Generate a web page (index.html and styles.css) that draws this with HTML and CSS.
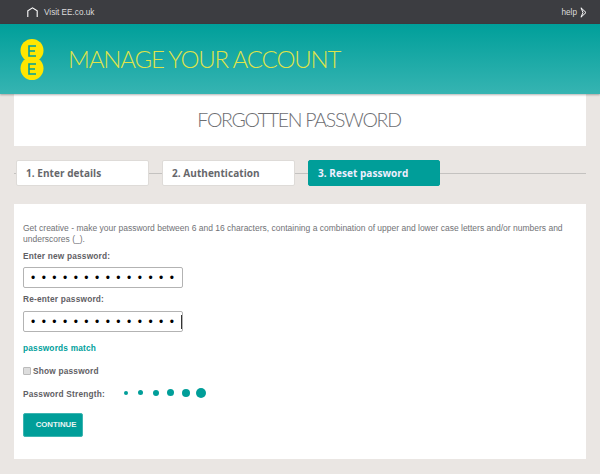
FILE: index.html
```html
<!DOCTYPE html>
<html lang="en">
<head>
<meta charset="utf-8">
<title>Manage your account</title>
<link rel="stylesheet" href="styles.css">
</head>
<body>
<div class="topbar">
  <a class="visit">
    <svg class="home" width="11" height="11" viewBox="0 0 11 11"><path d="M.8 10V3.800L5.500 .8l4.700 3V10" fill="none" stroke="#fff" stroke-width="1.100"/></svg>
    <span>Visit EE.co.uk</span>
  </a>
  <a class="help">help
    <svg class="help-icon" width="7" height="11" viewBox="0 0 7 11"><path d="M1 .8l5 4.700-5 4.700M1 .8l2 4.700-2 4.700" fill="none" stroke="#fff" stroke-width="1"/></svg>
  </a>
</div>
<header class="brand">
  <svg class="logo" width="24" height="41" viewBox="0 0 24 41">
    <circle cx="12" cy="11.500" r="11.500" fill="#ffe600"/>
    <circle cx="12" cy="29.500" r="11.500" fill="#ffe600"/>
    <path d="M16 7H9v10h7M9 12h6M16 25H9v10h7M9 30h6" fill="none" stroke="#00a09b" stroke-width="1.600"/>
  </svg>
  <h1 class="brand-title">MANAGE YOUR ACCOUNT</h1>
</header>
<main class="page">
  <section class="title-card"><h2 class="title">FORGOTTEN PASSWORD</h2></section>
  <ol class="steps">
    <li class="step">1. Enter details</li>
    <li class="step">2. Authentication</li>
    <li class="step active">3. Reset password</li>
  </ol>
  <section class="form-card">
    <p class="intro">Get creative - make your password between 6 and 16 characters, containing a combination of upper and lower case letters and/or numbers and underscores (_).</p>
    <label class="label">Enter new password:</label>
    <div class="input"><span class="dots">••••••••••••••</span></div>
    <label class="label">Re-enter password:</label>
    <div class="input input-second"><span class="dots">••••••••••••••</span><span class="caret"></span></div>
    <p class="match">passwords match</p>
    <div class="show"><span class="check"></span><span>Show password</span></div>
    <div class="strength">
      <span class="strength-label">Password Strength:</span>
      <span class="meter">
        <i class="d1"></i><i class="d2"></i><i class="d3"></i><i class="d4"></i><i class="d5"></i><i class="d6"></i>
      </span>
    </div>
    <button class="continue">CONTINUE</button>
  </section>
</main>
</body>
</html>
```
FILE: styles.css
```css
* { box-sizing: border-box; }
html, body { margin: 0; padding: 0; }
body { width: 600px; height: 474px; overflow: hidden; background: #eae6e3; font-family: "Liberation Sans", Arial, sans-serif; color: #5f6064; }
.topbar { height: 24px; background: #3c3d41; display: flex; align-items: center; justify-content: space-between; padding: 0 13px 0 27px; color: #dcdcdc; font-size: 8.200px; }
.visit { display: flex; align-items: center; gap: 6px; }
.help { display: flex; align-items: center; gap: 3px; }
.brand { height: 70px; background: linear-gradient(#009f9a, #36b4b2); display: flex; align-items: center; padding-left: 20px; box-shadow: 0 1px 2px rgba(0,0,0,.3); position: relative; }
.logo { margin-top: 1px; flex: none; }
.brand-title { margin: 0 0 0 24px; font: 300 24px/1 Lato, sans-serif; color: #dfe34a; letter-spacing: -1.150px; }
.page { padding: 0 14px; }
.title-card { height: 52px; background: #fff; display: flex; align-items: center; justify-content: center; padding-right: 2px; }
.title { margin: 0; font: 300 19.500px/1 Lato, sans-serif; color: #6d6e72; letter-spacing: -1.300px; }
.steps { list-style: none; margin: 14px 0 18px; padding: 0 0 0 2px; height: 26px; display: flex; gap: 13px; background: linear-gradient(#c4c2c0, #c4c2c0) 0 13px / 100% 1px no-repeat; }
.step { width: 133px; height: 26px; background: #fff; border: 1px solid #dedbd8; border-radius: 2px; font: 700 10px/24px "Open Sans", sans-serif; padding-left: 9px; letter-spacing: .05px; color: #66676b; }
.step.active { width: 132px; background: #009e99; border-color: #009e99; color: #eef; }
.form-card { height: 255px; background: #fff; padding: 19px 9px 0; }
.intro { margin: 0; line-height: 10.500px; color: #717276; font-size: 8.500px; }
.label { display: block; margin-top: 7px; font: 700 8.300px/11px "Liberation Sans", sans-serif; letter-spacing: .2px; color: #5f6064; }
.input { margin-top: 5px; width: 160px; height: 21px; border: 1px solid #b3b3b3; border-radius: 2px; padding-left: 7px; display: flex; align-items: center; overflow: hidden; }
.input-second { margin-top: 6px; }
.label + .input + .label { margin-top: 6px; }
.dots { flex: none; font: 12px/1 "Liberation Sans", sans-serif; color: #000; letter-spacing: 6.470px; white-space: nowrap; }
.match { margin: 11px 0 0; font: 700 8.300px/11px "Liberation Sans", sans-serif; letter-spacing: .2px; color: #00a09b; }
.show { margin-top: 11px; display: flex; align-items: center; gap: 2px; font: 700 8.300px/12px "Liberation Sans", sans-serif; letter-spacing: .2px; }
.check { width: 8px; height: 8px; border: 1px solid #bbb; background: #ddd; border-radius: 1px; }
.strength { margin-top: 11px; display: flex; align-items: center; height: 12px; }
.strength-label { width: 95px; font: 700 8.300px/12px "Liberation Sans", sans-serif; letter-spacing: .2px; }
.meter { display: grid; grid-template-columns: repeat(6, 15px); place-items: center; margin-top: -3px; }
.meter i { display: block; border-radius: 50%; background: #009e99; }
.d1 { width: 4px; height: 4px; } .d2 { width: 5px; height: 5px; } .d3 { width: 6px; height: 6px; }
.d4 { width: 7px; height: 7px; } .d5 { width: 8px; height: 8px; } .d6 { width: 10px; height: 10px; }
.continue { display: block; margin-top: 13px; width: 60px; height: 24px; background: #009e99; border: 1px solid #3db5b1; border-radius: 2px; color: #e8f5f4; font: 700 7.800px/1 "Liberation Sans", sans-serif; padding: 0 0 0 6px; }
.caret { flex: none; width: 1px; height: 14px; background: #333; margin-left: .4px; }
```
